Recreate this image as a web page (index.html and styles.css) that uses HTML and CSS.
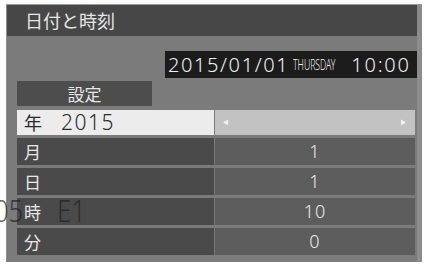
FILE: index.html
```html
<!DOCTYPE html>
<html lang="ja">
<head>
<meta charset="utf-8">
<title>日付と時刻</title>
<link rel="stylesheet" href="styles.css">
</head>
<body>
<div class="frame">
  <div class="titlebar">日付と時刻</div>
  <div class="content">
    <div class="clock-line">
      <div class="clock"><span class="date">2015/01/01</span><span class="dow">THURSDAY</span><span class="time">10:00</span></div>
    </div>
    <div class="set">設定</div>
    <div class="row row-active">
      <div class="label"><span class="kanji">年</span><span class="year">2015</span></div>
      <div class="value value-active"><span class="arrow">&#9664;</span><span class="arrow">&#9654;</span></div>
    </div>
    <div class="row">
      <div class="label">月</div>
      <div class="value">1</div>
    </div>
    <div class="row">
      <div class="label">日</div>
      <div class="value">1</div>
    </div>
    <div class="row">
      <div class="label">時</div>
      <div class="value">10</div>
    </div>
    <div class="row">
      <div class="label">分</div>
      <div class="value">0</div>
    </div>
  </div>
</div>
<div class="ghost"><span class="ghost-a">05</span><span class="ghost-b">E1</span></div>
</body>
</html>
```

FILE: styles.css
```css
html, body {
  margin: 0;
  padding: 0;
  background: #ffffff;
  width: 426px;
  height: 264px;
  overflow: hidden;
  position: relative;
  font-family: "Noto Sans CJK JP", "Noto Sans", sans-serif;
}

.frame {
  margin: 4px 0 0 6px;
  width: 416px;
  height: 258px;
  box-sizing: border-box;
  background: #7b7b7b;
  border-top: 1px solid #9a9a9a;
  border-left: 1px solid #8f8f8f;
  border-right: 5px solid #8c8c8c;
}

.titlebar {
  height: 31px;
  line-height: 31px;
  background: #474747;
  color: #e6e6e6;
  font-size: 18px;
  padding-left: 18px;
}

.content {
  padding-left: 10px;
}

.clock-line {
  margin-top: 15px;
  display: flex;
  justify-content: flex-end;
}

.clock {
  width: 252px;
  height: 27px;
  box-sizing: border-box;
  background: #1c1c1c;
  color: #f0f0f0;
  font-family: "Noto Sans", sans-serif;
  font-weight: 300;
  font-size: 20px;
  line-height: 27px;
  padding-left: 3px;
  white-space: nowrap;
  display: flex;
  align-items: center;
}

.date {
  letter-spacing: 1.6px;
}

.dow {
  display: inline-block;
  font-size: 14px;
  width: 46px;
  margin-left: 4px;
  transform: scaleX(0.62);
  transform-origin: left center;
  letter-spacing: 0;
}

.time {
  margin-left: 12px;
  letter-spacing: 1.8px;
}

.set {
  margin-top: 3px;
  width: 135px;
  height: 25px;
  line-height: 25px;
  background: #4d4d4d;
  color: #e8e8e8;
  font-size: 17px;
  text-align: center;
}

.row {
  display: flex;
  gap: 1px;
  margin-top: 3px;
  height: 27px;
  line-height: 27px;
}

.row-active {
  margin-top: 4px;
  height: 25px;
  line-height: 25px;
}

.label {
  width: 197px;
  background: #4a4a4a;
  color: #e8e8e8;
  font-size: 17px;
  padding-left: 7px;
  box-sizing: border-box;
}

.row-active .label {
  background: #ececec;
  color: #2a2a2a;
}

.kanji {
  font-size: 18px;
}

.year {
  margin-left: 19px;
  font-family: "Noto Sans", sans-serif;
  font-weight: 300;
  font-size: 21px;
  letter-spacing: 1.5px;
}

.value {
  width: 200px;
  background: #5d5d5d;
  color: #ececec;
  font-family: "Noto Sans", sans-serif;
  font-weight: 300;
  font-size: 18px;
  text-align: center;
  letter-spacing: 1px;
}

.value-active {
  background: #c2c2c2;
  display: flex;
  justify-content: space-between;
  align-items: center;
  padding: 0 7px;
  box-sizing: border-box;
}

.arrow {
  color: #f4f4f4;
  font-size: 7px;
  line-height: 1;
}

.ghost {
  position: absolute;
  left: -6px;
  top: 190px;
  font-family: "Noto Sans", sans-serif;
  font-weight: 300;
  font-size: 32px;
  line-height: 40px;
  color: rgba(30, 30, 30, 0.7);
  white-space: nowrap;
}

.ghost-a {
  display: inline-block;
  transform: scaleX(0.8);
  transform-origin: left center;
}

.ghost-b {
  display: inline-block;
  margin-left: 26px;
  transform: scaleX(0.8);
  transform-origin: left center;
}
```
